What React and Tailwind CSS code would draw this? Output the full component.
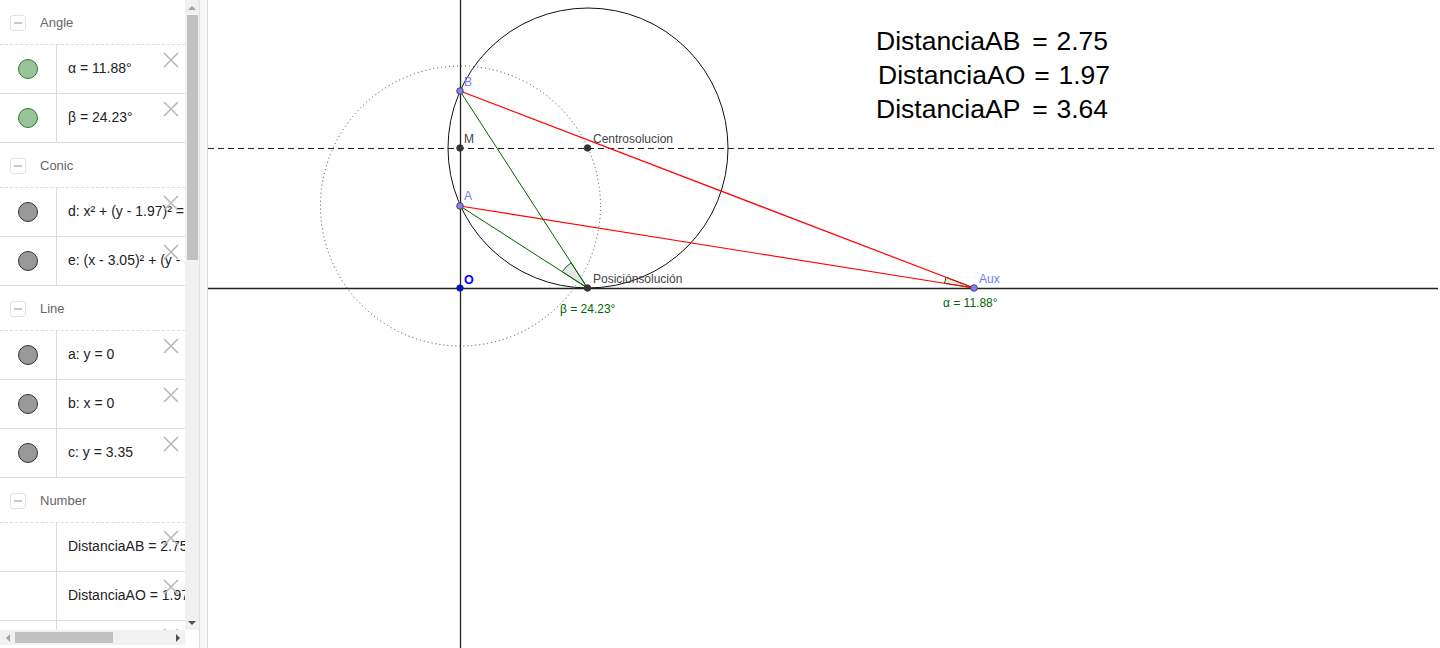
import React from "react";

const font = { fontFamily: '"Liberation Sans", Arial, sans-serif' };

const sections = [
  {
    title: "Angle",
    items: [
      { text: "α = 11.88°", dot: "green" },
      { text: "β = 24.23°", dot: "green" },
    ],
  },
  {
    title: "Conic",
    items: [
      { text: "d: x² + (y - 1.97)² = 11.22", dot: "gray" },
      { text: "e: (x - 3.05)² + (y - 3.35)² = 11.22", dot: "gray" },
    ],
  },
  {
    title: "Line",
    items: [
      { text: "a: y = 0", dot: "gray" },
      { text: "b: x = 0", dot: "gray" },
      { text: "c: y = 3.35", dot: "gray" },
    ],
  },
  {
    title: "Number",
    items: [
      { text: "DistanciaAB = 2.75", dot: null },
      { text: "DistanciaAO = 1.97", dot: null },
      { text: "DistanciaAP = 3.64", dot: null },
    ],
  },
];

function XIcon() {
  return (
    <svg width="16" height="16" viewBox="0 0 16 16" className="absolute right-[6px] top-[7px]">
      <path d="M1 1 L15 15 M15 1 L1 15" stroke="#b8b8b8" strokeWidth="1.6" fill="none" />
    </svg>
  );
}

function Header({ title }) {
  return (
    <div className="flex h-[45px] shrink-0 items-center border-b border-dashed border-[#dcdcdc] pt-[2px]">
      <div className="ml-[10px] flex h-[16px] w-[16px] items-center justify-center rounded-[3px] border border-[#e2e2e2]">
        <div className="h-[2px] w-[8px] bg-[#c8c8c8]" />
      </div>
      <span className="ml-[14px] text-[13px] text-[#666]">{title}</span>
    </div>
  );
}

function Row({ item }) {
  return (
    <div className="relative flex h-[49px] shrink-0 border-b border-[#dcdcdc]">
      <div className="flex w-[57px] shrink-0 items-center justify-center border-r border-[#dcdcdc] pr-px">
        {item.dot === "green" && (
          <div className="h-[20px] w-[20px] rounded-full border border-[#2e7d2e] bg-[#99c499]" />
        )}
        {item.dot === "gray" && (
          <div className="h-[20px] w-[20px] rounded-full border border-[#333] bg-[#999]" />
        )}
      </div>
      <div className="flex min-w-0 flex-1 items-center overflow-hidden whitespace-nowrap pl-[11px] pb-[2px] text-[14px] text-[#222]">
        {item.text}
      </div>
      <XIcon />
    </div>
  );
}

function Sidebar() {
  return (
    <div className="flex h-[648px] w-[199px] shrink-0 flex-col bg-white">
      <div className="flex h-[630px] shrink-0">
        <div className="flex w-[185px] shrink-0 flex-col overflow-hidden">
          {sections.map((s) => (
            <React.Fragment key={s.title}>
              <Header title={s.title} />
              {s.items.map((it) => (
                <Row key={it.text} item={it} />
              ))}
            </React.Fragment>
          ))}
        </div>
        <div className="flex w-[14px] shrink-0 flex-col items-center bg-[#f1f1f1]">
          <div className="flex h-[15px] w-full items-center justify-center">
            <div className="h-0 w-0 border-x-[4px] border-b-[4px] border-x-transparent border-b-[#a3a3a3]" />
          </div>
          <div className="h-[245px] w-[11px] bg-[#c1c1c1]" />
          <div className="flex-1" />
          <div className="flex h-[15px] w-full items-center justify-center">
            <div className="h-0 w-0 border-x-[4px] border-t-[4px] border-x-transparent border-t-[#505050]" />
          </div>
        </div>
      </div>
      <div className="flex h-[15px] shrink-0">
        <div className="flex w-[185px] items-center bg-[#f1f1f1]">
          <div className="flex w-[15px] justify-center">
            <div className="h-0 w-0 border-y-[4px] border-r-[4px] border-y-transparent border-r-[#a3a3a3]" />
          </div>
          <div className="h-[11px] w-[98px] bg-[#c1c1c1]" />
          <div className="flex-1" />
          <div className="flex w-[15px] justify-center">
            <div className="h-0 w-0 border-y-[4px] border-l-[4px] border-y-transparent border-l-[#505050]" />
          </div>
        </div>
        <div className="flex-1 bg-white" />
      </div>
      <div className="flex-1 bg-white" />
    </div>
  );
}

function Pt({ x, y, fill }) {
  return <circle cx={x} cy={y} r="3.3" fill={fill} stroke="#333" strokeWidth="0.8" />;
}

function BigLine({ y, name, nameX, eqX, valEnd, value }) {
  return (
    <g fontSize="26.5" fill="#000">
      <text x={nameX} y={y}>{name}</text>
      <text x={eqX} y={y} textAnchor="middle">=</text>
      <text x={valEnd} y={y} textAnchor="end">{value}</text>
    </g>
  );
}

function Canvas() {
  const O = [460, 288];
  const A = [460, 206];
  const B = [460, 91];
  const M = [460, 148];
  const C = [587.5, 148];
  const P = [587.5, 288];
  const X = [974, 288];

  const sector = (c, p1, p2, r) => {
    const u = (p) => {
      const dx = p[0] - c[0];
      const dy = p[1] - c[1];
      const l = Math.hypot(dx, dy);
      return [c[0] + (dx / l) * r, c[1] + (dy / l) * r];
    };
    const a = u(p1);
    const b = u(p2);
    return `M${c[0]} ${c[1]} L${a[0]} ${a[1]} A${r} ${r} 0 0 1 ${b[0]} ${b[1]} Z`;
  };

  return (
    <svg
      className="block h-[648px] w-[1232px]"
      viewBox="208 0 1232 648"
      width="1232"
      height="648"
      style={font}
    >
      <rect x="208" y="0" width="1232" height="648" fill="#fff" />
      {/* axes */}
      <line x1="208" y1="288.5" x2="1438" y2="288.5" stroke="#222" strokeWidth="1.3" />
      <line x1="460.5" y1="0" x2="460.5" y2="648" stroke="#222" strokeWidth="1.3" />
      {/* dashed line c */}
      <line x1="208" y1="148.5" x2="1438" y2="148.5" stroke="#222" strokeWidth="1" strokeDasharray="6 4" />
      {/* circle d dotted */}
      <circle cx="460.5" cy="206" r="140" fill="none" stroke="#444" strokeWidth="1" strokeDasharray="1 3" />
      {/* circle e */}
      <circle cx="588" cy="148" r="140" fill="none" stroke="#111" strokeWidth="1" />
      {/* angle sectors */}
      <path d={sector(P, A, B, 30)} fill="#e4e4e4" fillOpacity="0.9" stroke="#006400" strokeWidth="1" />
      <path d={sector(X, B, A, 30)} fill="#e4e4e4" fillOpacity="0.9" stroke="#006400" strokeWidth="1" />
      {/* red lines */}
      <line x1={B[0]} y1={B[1]} x2={X[0]} y2={X[1]} stroke="#ff0000" strokeWidth="1.2" />
      <line x1={A[0]} y1={A[1]} x2={X[0]} y2={X[1]} stroke="#ff0000" strokeWidth="1.2" />
      {/* green lines */}
      <line x1={B[0]} y1={B[1]} x2={P[0]} y2={P[1]} stroke="#006400" strokeWidth="1" />
      <line x1={A[0]} y1={A[1]} x2={P[0]} y2={P[1]} stroke="#006400" strokeWidth="1" />
      {/* points */}
      <Pt x={M[0]} y={M[1]} fill="#333" />
      <Pt x={C[0]} y={C[1]} fill="#333" />
      <Pt x={P[0]} y={P[1]} fill="#333" />
      <Pt x={A[0]} y={A[1]} fill="#8080ff" />
      <Pt x={B[0]} y={B[1]} fill="#8080ff" />
      <Pt x={X[0]} y={X[1]} fill="#8080ff" />
      <Pt x={O[0]} y={O[1]} fill="#0000ff" />
      {/* labels */}
      <text x="464" y="86" fontSize="12" fill="#7878ff">B</text>
      <text x="464" y="143" fontSize="12" fill="#444">M</text>
      <text x="464" y="200" fontSize="12" fill="#7878ff">A</text>
      <text x="464" y="284" fontSize="12.5" fontWeight="bold" fill="#0000ff">O</text>
      <text x="593" y="143" fontSize="12" fill="#444">Centrosolucion</text>
      <text x="593" y="283" fontSize="12" fill="#444">Posiciónsolución</text>
      <text x="979" y="283" fontSize="12" fill="#7878ff">Aux</text>
      <text x="560" y="313" fontSize="12" fill="#006400">β = 24.23°</text>
      <text x="943" y="307" fontSize="12" fill="#006400">α = 11.88°</text>
      {/* big text */}
      <BigLine y={50} name="DistanciaAB" nameX={876} eqX={1040} valEnd={1108} value="2.75" />
      <BigLine y={84} name="DistanciaAO" nameX={878} eqX={1042} valEnd={1110} value="1.97" />
      <BigLine y={118} name="DistanciaAP" nameX={876} eqX={1040} valEnd={1108} value="3.64" />
    </svg>
  );
}

export default function App() {
  return (
    <div className="flex h-[648px] w-[1440px] overflow-hidden bg-white" style={font}>
      <Sidebar />
      <div className="h-[648px] w-px shrink-0 bg-[#e0e0e0]" />
      <div className="h-[648px] w-[7px] shrink-0 bg-[#f7f7f7]" />
      <div className="h-[648px] w-px shrink-0 bg-[#d8d8d8]" />
      <Canvas />
    </div>
  );
}
